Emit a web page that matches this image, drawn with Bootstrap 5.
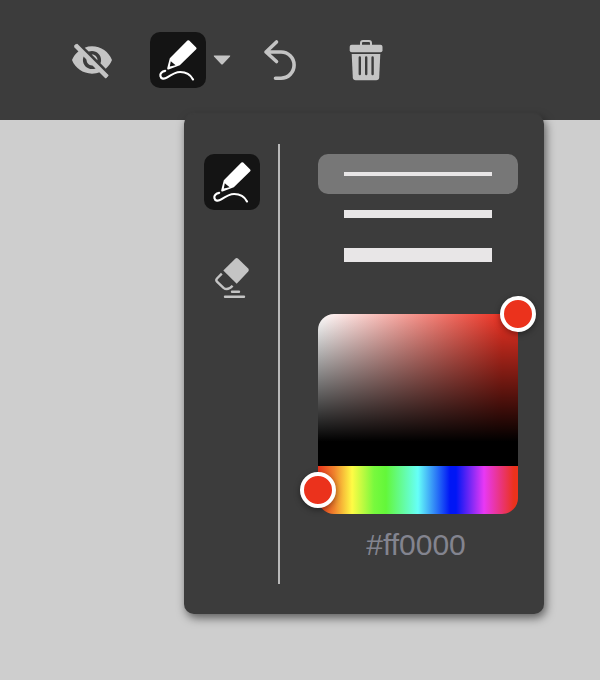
<!DOCTYPE html>
<html lang="en">
<head>
<meta charset="utf-8">
<meta name="viewport" content="width=device-width, initial-scale=1">
<title>Drawing toolbar</title>
<link href="https://cdn.jsdelivr.net/npm/bootstrap@5.3.0/dist/css/bootstrap.min.css" rel="stylesheet">
<style>
  body { background: #cecece; font-family: "Liberation Sans", sans-serif; }
  .toolbar { background: #3c3c3c; padding: 32px 64px; gap: 30px; }
  .tool { width: 56px; height: 56px; color: #c4c4c4; border: 0; border-radius: 10px; flex: none; }
  .tool:hover { color: #fff; }
  .tool.active, .tool.active:hover { background: #141414; color: #fff; }
  .tool svg, .caret svg { display: block; }
  .caret { width: 32px; height: 56px; border: 0; color: #c4c4c4; }
  .pen-group { margin-right: -16px; }
  .pen-panel { top: 82px; left: 34px; width: 360px; padding: 30px 26px 30px 20px; background: #3c3c3c; border-radius: 10px; box-shadow: 2px 4px 10px rgba(0,0,0,.55), 0 -1px 2px rgba(255,255,255,.04); z-index: 10; }
  .tool-list { padding: 10px 18px 0 0; gap: 40px; border-right: 2px solid #b9b9b9; }
  .settings { padding: 10px 0 20px 38px; }
  .stroke-choice { height: 40px; padding: 0 26px; border: 0; border-radius: 10px; }
  .stroke-choice.tall { height: 42px; }
  .stroke-choice.active { background: #777; }
  .stroke-line { background: #e8e6e7; height: 4px; }
  .stroke-line.medium { height: 8px; }
  .stroke-line.thick { height: 14px; }
  .picker { margin-top: 38px; }
  .shade-area { height: 152px; border-radius: 16px 0 0 0; background: linear-gradient(to bottom, transparent, #000 84%), linear-gradient(to right, #fff, #eb3223 92%); }
  .hue-strip { height: 48px; border-radius: 0 0 16px 16px; background: linear-gradient(to right, #eb321c 0%, #f0822d 8%, #fffb45 17%, #78f93d 28%, #63f73a 34%, #66fff8 50%, #0016f5 66%, #0016f5 69%, #e838f5 83%, #eb321c 98%); }
  .shade-handle { width: 36px; height: 36px; top: 0; right: 0; transform: translate(50%, -50%); border: 4px solid #fff; background: #eb321c; box-shadow: 0 2px 6px rgba(0,0,0,.4); }
  .hue-range { appearance: none; -webkit-appearance: none; background: transparent; width: calc(100% + 36px); height: 36px; margin: 6px -18px; flex: none; }
  .hue-range::-webkit-slider-thumb { -webkit-appearance: none; width: 36px; height: 36px; border-radius: 50%; border: 4px solid #fff; background: #eb321c; box-shadow: 0 2px 6px rgba(0,0,0,.4); }
  .hue-range::-moz-range-thumb { width: 28px; height: 28px; border-radius: 50%; border: 4px solid #fff; background: #eb321c; }
  .hex-value { background: transparent; color: #83848f; font-size: 30px; line-height: 38px; margin-top: 12px; }
</style>
<script src="https://cdn.jsdelivr.net/npm/bootstrap@5.3.0/dist/js/bootstrap.bundle.min.js"></script>
</head>
<body class="min-vh-100">
<svg width="0" height="0" class="position-absolute" aria-hidden="true">
  <symbol id="pencil" viewBox="0 0 56 56">
    <path fill="currentColor" fill-rule="evenodd" d="M37.4 8.6Q38.3 7.8 39.2 8.6L46.2 15.4Q47 16.3 46.2 17.2L29.8 33.3L18.6 37.4Q17 37.8 17.2 36.3L19.8 26.3ZM20.8 29.2L19.8 34.4L25.6 33.2Z"/>
    <path fill="none" stroke="currentColor" stroke-width="2.200" stroke-linecap="round" d="M15.2 38.8C12 39.4 9.8 41.4 10.4 44C11 47 14.2 47.4 17.2 45.4C21.6 42.4 25.2 40 30.2 40C36.2 40 40.6 42.8 43 47.4"/>
  </symbol>
</svg>
<header class="toolbar d-flex align-items-center">
  <button type="button" class="tool btn p-0" aria-label="Hide drawing">
    <svg width="56" height="56" viewBox="-3.400 -3.400 30.800 30.800" aria-hidden="true">
      <path fill="currentColor" d="M12 7c2.760 0 5 2.240 5 5 0 .65-.13 1.260-.36 1.830l2.920 2.920c1.510-1.260 2.700-2.890 3.430-4.750-1.730-4.390-6-7.500-11-7.500-1.400 0-2.740.25-3.980.7l2.160 2.160C10.740 7.130 11.350 7 12 7zM2 4.270l2.280 2.280.46.46C3.080 8.300 1.780 10.020 1 12c1.730 4.390 6 7.500 11 7.500 1.550 0 3.030-.3 4.380-.84l.42.42L19.730 22 21 20.730 3.270 3 2 4.270zM7.530 9.800l1.550 1.550c-.05.21-.08.43-.08.65 0 1.660 1.340 3 3 3 .22 0 .44-.03.65-.08l1.550 1.550c-.67.33-1.410.53-2.200.53-2.760 0-5-2.240-5-5 0-.79.2-1.530.53-2.200zm4.310-.78l3.150 3.150.02-.16c0-1.660-1.340-3-3-3l-.17.01z"/>
      <path fill="none" stroke="currentColor" stroke-width="2.500" d="M3 4L20.300 21.300"/>
    </svg>
  </button>
  <div class="pen-group position-relative d-flex">
    <button type="button" class="tool btn p-0 active" aria-label="Pen"><svg width="56" height="56" aria-hidden="true"><use href="#pencil"/></svg></button>
    <button type="button" class="caret btn p-0" aria-label="Pen options" aria-expanded="true">
      <svg width="32" height="56" viewBox="206 32 32 56" aria-hidden="true"><path fill="currentColor" d="M214.400 55.500H229.600Q230.800 55.500 230 56.500L223 64Q222 65 221 64L214 56.500Q213.200 55.500 214.400 55.500Z"/></svg>
    </button>
    <section class="pen-panel position-absolute d-flex" aria-label="Pen options">
      <div class="tool-list d-flex flex-column">
        <button type="button" class="tool btn p-0 active" aria-label="Draw"><svg width="56" height="56" aria-hidden="true"><use href="#pencil"/></svg></button>
        <button type="button" class="tool btn p-0" aria-label="Erase">
          <svg width="56" height="56" viewBox="204 250 56 56" aria-hidden="true">
            <path fill="currentColor" d="M235.200 258.700Q236.700 257.300 238.200 258.700L248.200 268.500Q249.600 270 248.200 271.500L236.700 283.800L223.300 270.600Z"/>
            <path fill="none" stroke="currentColor" stroke-width="2.400" d="M221.800 273.700L217 278.500Q215.600 280 217 281.600L223.500 287.800Q227.500 291.200 232.600 285.800"/>
            <path stroke="currentColor" stroke-width="2.400" stroke-linecap="round" d="M232 291.700H239M225 296.800H244"/>
          </svg>
        </button>
      </div>
      <div class="settings flex-grow-1">
        <div class="d-flex flex-column" role="group" aria-label="Stroke width">
          <button type="button" class="stroke-choice btn active" aria-label="Thin"><span class="stroke-line d-block"></span></button>
          <button type="button" class="stroke-choice btn" aria-label="Medium"><span class="stroke-line medium d-block"></span></button>
          <button type="button" class="stroke-choice tall btn" aria-label="Thick"><span class="stroke-line thick d-block"></span></button>
        </div>
        <div class="picker position-relative">
          <div class="shade-area"></div>
          <button type="button" class="shade-handle btn p-0 rounded-circle position-absolute" aria-label="Shade"></button>
          <div class="hue-strip d-flex"><input type="range" class="hue-range" min="0" max="360" value="0" aria-label="Hue"></div>
        </div>
        <input type="text" class="hex-value w-100 border-0 p-0 pe-1 text-center d-block" value="#ff0000" aria-label="Hex colour">
      </div>
    </section>
  </div>
  <button type="button" class="tool btn p-0" aria-label="Undo">
    <svg width="56" height="56" viewBox="252 32 56 56" aria-hidden="true"><path fill="none" stroke="currentColor" stroke-width="3.600" stroke-linecap="round" stroke-linejoin="round" d="M276.500 42L266 52L276.500 61.500M266 52H281A13 13 0 0 1 281 78.200H275.500"/></svg>
  </button>
  <button type="button" class="tool btn p-0" aria-label="Delete">
    <svg width="56" height="56" viewBox="338 32 56 56" aria-hidden="true">
      <path fill="none" stroke="currentColor" stroke-width="2" d="M361 45V43Q361 41 363 41H369Q371 41 371 43V45"/>
      <rect x="349.700" y="44.700" width="32.800" height="7.500" rx="2" fill="currentColor"/>
      <path fill="currentColor" d="M351.700 54H380.300L379.200 77.500Q379 80.200 376.200 80.200H355.700Q353 80.200 352.800 77.500Z"/>
      <path stroke="#3c3c3c" stroke-width="2.400" stroke-linecap="round" d="M359.800 57.500V74M366.200 57.500V74M372.600 57.500V74"/>
    </svg>
  </button>
</header>
</body>
</html>
